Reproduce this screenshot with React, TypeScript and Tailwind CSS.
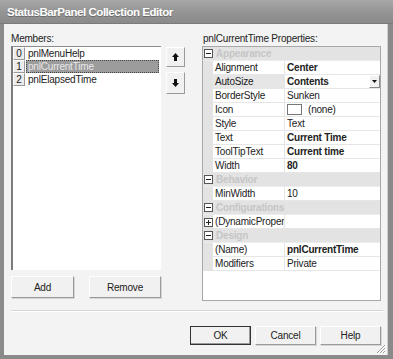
import React from "react";

type Prop = {
  name: string;
  value?: string;
  bold?: boolean;
  dropdown?: boolean;
  icon?: boolean;
  selected?: boolean;
  expand?: boolean;
};

type Category = { title: string; props: Prop[] };

const categories: Category[] = [
  {
    title: "Appearance",
    props: [
      { name: "Alignment", value: "Center", bold: true },
      { name: "AutoSize", value: "Contents", bold: true, dropdown: true, selected: true },
      { name: "BorderStyle", value: "Sunken" },
      { name: "Icon", value: "(none)", icon: true },
      { name: "Style", value: "Text" },
      { name: "Text", value: "Current Time", bold: true },
      { name: "ToolTipText", value: "Current time", bold: true },
      { name: "Width", value: "80", bold: true },
    ],
  },
  { title: "Behavior", props: [{ name: "MinWidth", value: "10" }] },
  { title: "Configurations", props: [{ name: "(DynamicProperties)", expand: true }] },
  {
    title: "Design",
    props: [
      { name: "(Name)", value: "pnlCurrentTime", bold: true },
      { name: "Modifiers", value: "Private" },
    ],
  },
];

const members = ["pnlMenuHelp", "pnlCurrentTime", "pnlElapsedTime"];

function BoxSign({ plus }: { plus?: boolean }) {
  return (
    <svg width="9" height="9" viewBox="0 0 9 9" className="block">
      <rect x="0.5" y="0.5" width="8" height="8" fill="#fff" stroke="#555" />
      <path d="M2 4.5h5" stroke="#222" />
      {plus && <path d="M4.5 2v5" stroke="#222" />}
    </svg>
  );
}

function Button({ label, w, primary }: { label: string; w: string; primary?: boolean }) {
  return (
    <div
      className={`${w} flex items-center justify-center bg-[#f1f1f1] text-[10px] text-[#222] ${
        primary
          ? "border border-[#333] shadow-[inset_-1px_-1px_0_#9a9a9a]"
          : "border border-t-white border-l-white border-r-[#9a9a9a] border-b-[#9a9a9a] shadow-[1px_1px_0_#d6d6d6]"
      }`}
    >
      {label}
    </div>
  );
}

function Arrow({ down }: { down?: boolean }) {
  return (
    <svg width="7" height="8" viewBox="0 0 7 8" className={down ? "rotate-180" : ""}>
      <path d="M3.5 0L7 4H5v4H2V4H0z" fill="#111" />
    </svg>
  );
}

export default function App() {
  return (
    <div className="w-[393px] h-[359px] flex flex-col bg-[#8a8a8a] font-['Liberation_Sans',Arial,sans-serif] overflow-hidden">
      {/* title bar */}
      <div className="h-[24px] shrink-0 flex items-center pl-[7px] pt-[3px] bg-gradient-to-b from-[#a8a8a8] via-[#959595] to-[#8a8a8a] border-b border-[#7a7a7a]">
        <span className="text-[11.5px] font-bold text-white tracking-[-0.45px] [text-shadow:0_1px_0_#6a6a6a]">
          StatusBarPanel Collection Editor
        </span>
      </div>

      {/* body */}
      <div className="flex-1 ml-[4px] mr-[5px] mb-[4px] bg-[#f3f3f3] border-r border-[#d0d0d0] flex flex-col pl-[7px] pt-[8px] relative tracking-[-0.2px]">
        <div className="flex">
          {/* members */}
          <div className="w-[150px] flex flex-col">
            <div className="h-[14px] text-[10px] leading-[14px] text-[#222]">Members:</div>
            <div className="h-[224px] bg-white border-l-2 border-t border-[#8c8c8c] border-l-[#7c7c7c] flex flex-col">
              {members.map((m, i) => (
                <div key={m} className="h-[13px] flex items-stretch">
                  <div className="w-[12px] bg-[#ececec] border border-t-white border-l-white border-r-[#999] border-b-[#999] text-[10px] leading-[11px] text-center text-[#222]">
                    {i}
                  </div>
                  {i === 1 ? (
                    <div className="ml-[1px] flex-1 mr-[2px] bg-[#9c9c9c] outline-1 outline-dotted outline-[#444] -outline-offset-1 text-[10px] leading-[13px] pl-[2px] text-[#e8e8e8]">
                      {m}
                    </div>
                  ) : (
                    <div className="ml-[1px] flex-1 text-[10px] leading-[13px] pl-[2px] text-[#222]">{m}</div>
                  )}
                </div>
              ))}
            </div>
            <div className="mt-[6px] h-[22px] flex gap-[15px]">
              <Button label="Add" w="w-[63px]" />
              <Button label="Remove" w="w-[72px]" />
            </div>
          </div>

          {/* up / down */}
          <div className="ml-[5px] pt-[15px] flex flex-col gap-[5px]">
            <div className="w-[19px] h-[20px] flex items-center justify-center bg-[#f1f1f1] border border-t-white border-l-white border-r-[#9a9a9a] border-b-[#9a9a9a]">
              <Arrow />
            </div>
            <div className="w-[19px] h-[22px] flex items-center justify-center bg-[#f1f1f1] border border-t-white border-l-white border-r-[#9a9a9a] border-b-[#9a9a9a]">
              <Arrow down />
            </div>
          </div>

          {/* properties */}
          <div className="ml-[17px] w-[179px] flex flex-col">
            <div className="h-[14px] text-[10px] leading-[14px] text-[#222] pl-[1px]">pnlCurrentTime Properties:</div>
            <div className="h-[255px] bg-white border border-[#a8a8a8] flex flex-col">
              {categories.map((c) => (
                <React.Fragment key={c.title}>
                  <div className="h-[14px] shrink-0 flex items-center bg-[#e3e3e3] border-b border-[#ececec]">
                    <div className="w-[10px] flex justify-center">
                      <BoxSign />
                    </div>
                    <span className="ml-[3px] text-[10px] font-bold text-[#c6c6c6]">{c.title}</span>
                  </div>
                  {c.props.map((p) => (
                    <div key={p.name} className="h-[14px] shrink-0 flex">
                      <div className="w-[10px] bg-[#e3e3e3] flex items-center justify-center">
                        {p.expand && <BoxSign plus />}
                      </div>
                      <div
                        className={`w-[72px] border-b border-r border-[#e6e6e6] text-[10px] leading-[13px] pl-[2px] text-[#222] whitespace-nowrap overflow-hidden ${
                          p.selected ? "bg-[#e6e6e6]" : "bg-white"
                        }`}
                      >
                        {p.name}
                      </div>
                      <div className="flex-1 border-b border-[#e6e6e6] flex items-center pl-[2px] text-[10px] text-[#222]">
                        {p.icon && <span className="w-[15px] h-[11px] border border-[#777] bg-white mr-[6px]" />}
                        <span className={p.bold ? "font-bold" : ""}>{p.value}</span>
                        {p.dropdown && (
                          <span className="ml-auto w-[11px] h-[13px] bg-[#f1f1f1] border border-t-white border-l-white border-r-[#888] border-b-[#888] flex items-center justify-center">
                            <svg width="5" height="3" viewBox="0 0 5 3">
                              <path d="M0 0h5L2.5 3z" fill="#111" />
                            </svg>
                          </span>
                        )}
                      </div>
                    </div>
                  ))}
                </React.Fragment>
              ))}
            </div>
          </div>
        </div>

        {/* separator */}
        <div className="mt-[9px] mr-[4px] h-[2px] border-t border-[#d6d6d6] border-b border-b-white" />

        {/* dialog buttons */}
        <div className="mt-[14px] h-[19px] flex justify-end gap-[4px] pr-[6px]">
          <Button label="OK" w="w-[61px]" primary />
          <Button label="Cancel" w="w-[61px]" />
          <Button label="Help" w="w-[61px]" />
        </div>

        {/* size grip */}
        <svg width="11" height="11" viewBox="0 0 11 11" className="absolute right-[1px] bottom-[1px]">
          <path d="M10 2L2 10M10 5L5 10M10 8L8 10" stroke="#a0a0a0" strokeWidth="1" />
          <path d="M11 3L3 11M11 6L6 11M11 9L9 11" stroke="#fff" strokeWidth="1" />
        </svg>
      </div>
    </div>
  );
}
